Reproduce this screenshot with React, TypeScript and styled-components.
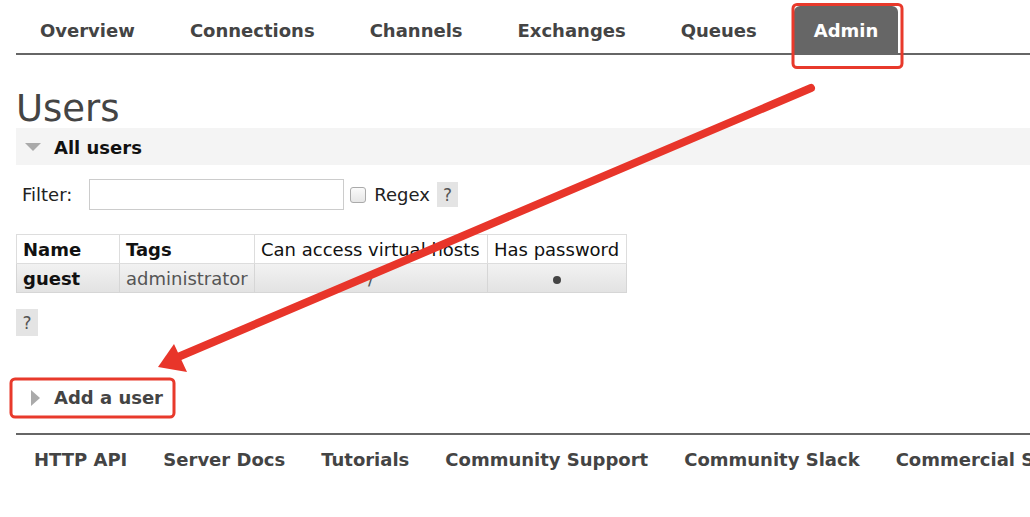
import { createGlobalStyle } from 'styled-components';
import styled from 'styled-components';

const GlobalStyle = createGlobalStyle`
  html, body {
    margin: 0;
    padding: 0;
    background: #ffffff;
  }
  body {
    font-family: "DejaVu Sans", Verdana, sans-serif;
    color: #484848;
    overflow: hidden;
  }
`;

const Page = styled.div`
  position: relative;
  width: 1030px;
  height: 517px;
  overflow: hidden;
  padding-left: 16px;
  box-sizing: border-box;
`;

const Nav = styled.ul`
  display: flex;
  list-style: none;
  margin: 0;
  padding: 6px 0 0 0;
  gap: 7px;
  border-bottom: 2px solid #666;
  width: 1200px;
`;

const NavItem = styled.li<{ $active?: boolean }>`
  height: 47px;
  display: flex;
  align-items: center;
  padding: 1px ${(p) => (p.$active ? '20px' : '24px')} 0;
  margin-left: ${(p) => (p.$active ? '6px' : '0')};
  font-size: 18px;
  font-weight: bold;
  color: ${(p) => (p.$active ? '#fff' : '#444')};
  background: ${(p) => (p.$active ? '#666' : 'transparent')};
  border-radius: 6px 6px 0 0;
  white-space: nowrap;
  box-sizing: border-box;
`;

const Title = styled.h1`
  margin: 34px 0 0 0;
  font-size: 37px;
  font-weight: normal;
  color: #444;
  line-height: 40px;
  height: 39px;
`;

const SectionBar = styled.div<{ $bg?: string }>`
  display: flex;
  align-items: center;
  height: 37px;
  padding-top: 1px;
  box-sizing: border-box;
  background: ${(p) => p.$bg ?? '#f4f4f4'};
  padding-left: 9px;
  font-size: 18px;
  font-weight: bold;
  color: #111;
  width: 1100px;
`;

const TriangleDown = styled.span`
  width: 0;
  height: 0;
  border-left: 8px solid transparent;
  border-right: 8px solid transparent;
  border-top: 8px solid #aaa;
  margin-right: 13px;
`;

const TriangleRight = styled.span`
  width: 0;
  height: 0;
  border-top: 8px solid transparent;
  border-bottom: 8px solid transparent;
  border-left: 9px solid #aaa;
  margin-right: 14px;
`;

const FilterRow = styled.div`
  display: flex;
  align-items: center;
  padding: 14px 0 0 6px;
  font-size: 18px;
  color: #222;
`;

const FilterInput = styled.div`
  width: 255px;
  height: 31px;
  box-sizing: border-box;
  border: 1px solid #ccc;
  margin: 0 6px 0 17px;
`;

const CheckBox = styled.span`
  width: 14px;
  height: 14px;
  border: 1px solid #aaa;
  border-radius: 3px;
  background: linear-gradient(#fafafa, #e6e6e6);
  margin-right: 8px;
`;

const HelpBox = styled.span`
  display: inline-flex;
  align-items: center;
  justify-content: center;
  width: 21px;
  height: 25px;
  background: #e4e4e4;
  color: #555;
  font-size: 17px;
  margin-left: 7px;
`;

const Table = styled.table`
  border-collapse: collapse;
  margin-top: 24px;
  font-size: 18px;
  color: #111;
`;

const Th = styled.th<{ $bold?: boolean; $w: number }>`
  width: ${(p) => p.$w}px;
  box-sizing: border-box;
  border: 1px solid #ddd;
  height: 29px;
  padding: 1px 6px 0;
  text-align: left;
  font-weight: ${(p) => (p.$bold ? 'bold' : 'normal')};
  white-space: nowrap;
`;

const Row = styled.tr`
  background: linear-gradient(#f2f2f2, #e2e2e2);
`;

const Td = styled.td<{ $bold?: boolean; $center?: boolean }>`
  border: 1px solid #d6d6d6;
  height: 28px;
  padding: 0 6px;
  font-weight: ${(p) => (p.$bold ? 'bold' : 'normal')};
  color: ${(p) => (p.$bold ? '#111' : '#555')};
  text-align: ${(p) => (p.$center ? 'center' : 'left')};
  white-space: nowrap;
`;

const Dot = styled.span`
  display: inline-block;
  width: 8px;
  height: 8px;
  border-radius: 50%;
  background: #444;
  vertical-align: middle;
`;

const HelpRow = styled.div`
  margin-top: 16px;
  height: 27px;
  display: flex;
`;

const BigHelp = styled(HelpBox)`
  margin-left: 0;
  width: 22px;
  height: 27px;
`;

const AddBar = styled(SectionBar)`
  margin-top: 41px;
  padding-left: 15px;
  height: 40px;
  color: #444;
`;

const Footer = styled.ul`
  display: flex;
  list-style: none;
  margin: 16px 0 0 0;
  padding: 14px 0 0 0;
  gap: 36px;
  border-top: 2px solid #666;
  width: 1300px;
  font-size: 18px;
  font-weight: bold;
  color: #444;
`;

const FooterItem = styled.li`
  white-space: nowrap;
  &:first-child {
    margin-left: 18px;
  }
`;

const Overlay = styled.svg`
  position: absolute;
  top: 0;
  left: 0;
  pointer-events: none;
`;

const navItems = ['Overview', 'Connections', 'Channels', 'Exchanges', 'Queues', 'Admin'];
const footerItems = ['HTTP API', 'Server Docs', 'Tutorials', 'Community Support', 'Community Slack', 'Commercial Support'];

export default function App() {
  return (
    <Page>
      <GlobalStyle />
      <Nav>
        {navItems.map((n) => (
          <NavItem key={n} $active={n === 'Admin'}>{n}</NavItem>
        ))}
      </Nav>
      <Title>Users</Title>
      <SectionBar>
        <TriangleDown />
        All users
      </SectionBar>
      <FilterRow>
        Filter:
        <FilterInput />
        <CheckBox />
        Regex
        <HelpBox>?</HelpBox>
      </FilterRow>
      <Table>
        <thead>
          <tr>
            <Th $bold $w={103}>Name</Th>
            <Th $bold $w={135}>Tags</Th>
            <Th $w={233}>Can access virtual hosts</Th>
            <Th $w={139}>Has password</Th>
          </tr>
        </thead>
        <tbody>
          <Row>
            <Td $bold>guest</Td>
            <Td>administrator</Td>
            <Td $center>/</Td>
            <Td $center><Dot /></Td>
          </Row>
        </tbody>
      </Table>
      <HelpRow>
        <BigHelp>?</BigHelp>
      </HelpRow>
      <AddBar $bg="transparent">
        <TriangleRight />
        Add a user
      </AddBar>
      <Footer>
        {footerItems.map((f) => (
          <FooterItem key={f}>{f}</FooterItem>
        ))}
      </Footer>
      <Overlay width="1030" height="517" viewBox="0 0 1030 517">
        <rect x="793" y="4.5" width="109" height="63" rx="4" fill="none" stroke="#e8392b" strokeWidth="3" />
        <rect x="11" y="379" width="163" height="38" rx="4" fill="none" stroke="#e8392b" strokeWidth="3" />
        <line x1="811" y1="88" x2="178" y2="357" stroke="#e8352a" strokeWidth="8" strokeLinecap="round" />
        <polygon points="158,367 174,344 187,372" fill="#e8352a" />
      </Overlay>
    </Page>
  );
}
